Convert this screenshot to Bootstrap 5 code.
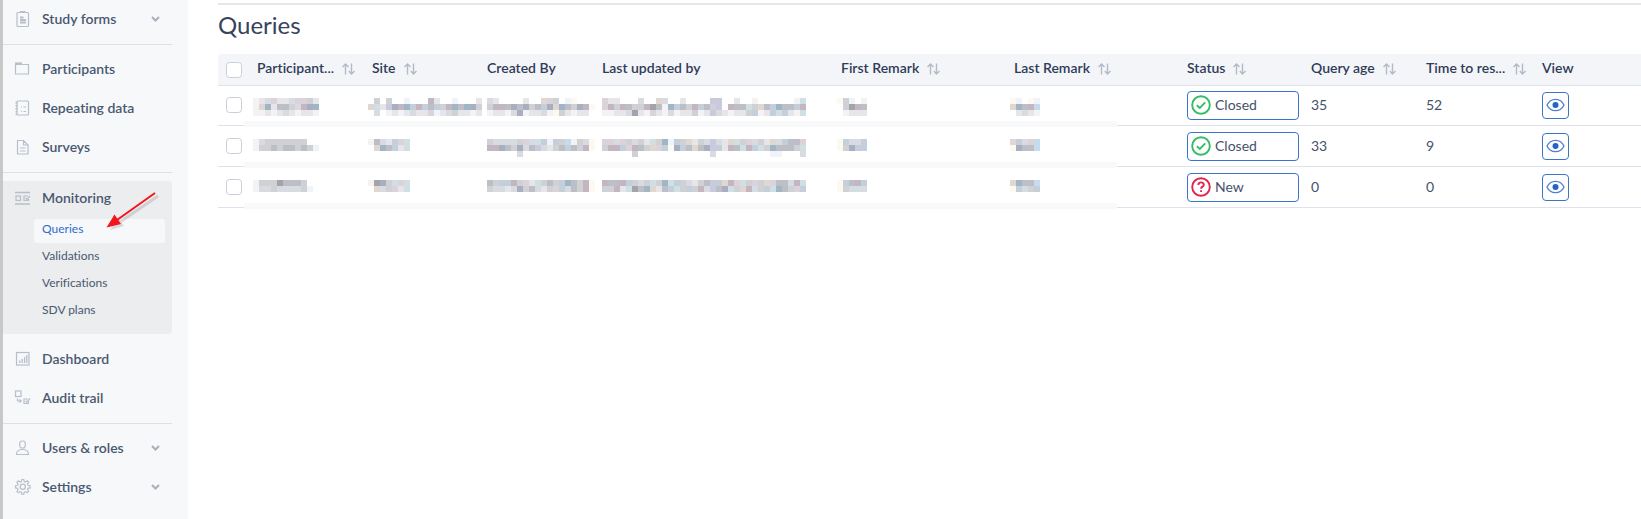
<!DOCTYPE html>
<html lang="en">
<head>
<meta charset="utf-8">
<meta name="viewport" content="width=device-width, initial-scale=1">
<title>Queries</title>
<link rel="stylesheet" href="https://cdn.jsdelivr.net/npm/bootstrap@5.3.0/dist/css/bootstrap.min.css">
<style>
  body { font-family: Lato, "Liberation Sans", sans-serif; font-size: 14px; line-height: 20px; color: #3f4b63; background: #fff; font-variant-ligatures: none; }
  .side { width: 188px; background: #f6f8fa; border-left: 3px solid #c8c8c8; padding-right: 16px; }
  .side hr { margin: 5px 0; border-top: 1px solid #dcdfe3; opacity: 1; }
  .side-link { height: 39px; width: 100%; padding: 0 12px 2px 11px; border: 0; background: none; color: #4a5870; font-weight: 600; text-align: left; text-decoration: none; }
  .side-link svg { flex: none; }
  .side-ico { width: 18px; height: 18px; margin-right: 10px; fill: none; stroke: #b9bfca; stroke-width: 1.2; }
  .chev { width: 9px; height: 6px; fill: none; stroke: #a9b0bc; stroke-width: 2; }
  .side-open { background: #ebedee; margin: 8px 0 6px; padding-bottom: 10px; border-radius: 0 3px 3px 0; }
  .side-open .side-link { height: 34px; padding-bottom: 0; }
  .sub-list { margin: 4px 7px 0 31px; gap: 3px; }
  .sub-link { height: 24px; padding: 0 8px 4px; font-size: 12px; border-radius: 3px; color: #4a5870; text-decoration: none; }
  .sub-link.active { background: #f6f8fa; color: #2f6bd0; }
  .pointer { position: absolute; left: 99px; top: 8px; width: 64px; height: 48px; }
  .main { padding: 3px 0 0 30px; }
  .main h1 { font-size: 24px; line-height: 28px; font-weight: 400; color: #37435d; margin: 6px 0 15px; }
  .rule { border-top: 2px solid #e6e7eb; }
  .grid-table { table-layout: fixed; border-collapse: separate; border-spacing: 0; color: #46516a; }
  .grid-table th { height: 31px; padding: 0 0 4px 13px; background: #f3f5f9; box-shadow: 0 1px 0 #e0e3ea; color: #2f3b57; font-weight: 600; white-space: nowrap; vertical-align: middle; }
  .grid-table th:first-child { border-top-left-radius: 4px; }
  .grid-table td { height: 41px; padding: 0 0 0 13px; border-bottom: 1px solid #dfe2ec; vertical-align: middle; }
  .grid-table .pick { padding: 0 0 0 8px; }
  .form-check-input { display: block; margin: 0; width: 16px; height: 16px; border-color: #c9ced9; border-radius: 3px; }
  .sort { width: 13px; height: 12px; margin-left: 8px; fill: none; stroke: #b4bac6; stroke-width: 1.4; }
  .grid-table .hid { position: relative; vertical-align: top; padding-top: 13px; }
  .hid::after { content: ""; position: absolute; left: 0; right: 0; bottom: -2px; height: 6px; background: #f8f9fb; }
  .hid-end::after { right: 57px; }
  .mosaic { display: block; shape-rendering: crispEdges; }
  .mosaic.fade-in { margin-left: -4px; }
  .state { width: 112px; height: 29px; padding: 0 0 0 3px; border: 1px solid #3c74cc; border-radius: 4px; background: #fff; color: #46516a; text-align: left; }
  .state svg { width: 20px; height: 20px; margin-right: 4px; fill: none; stroke-width: 1.9; }
  .view { width: 27px; height: 27px; padding: 0; border: 1px solid #3c74cc; border-radius: 4px; background: #fff; }
  .view svg { width: 19px; height: 14px; }
</style>
</head>
<body>
<svg class="d-none" aria-hidden="true">
  <symbol id="chev" viewBox="0 0 9 6"><path d="M1 1l3.500 3.500L8 1"/></symbol>
  <symbol id="sort" viewBox="0 0 13 12"><path d="M3.500 11.500V1M.5 4l3-3 3 3M9.500 .5V11M6.800 8l2.700 3 3-3"/></symbol>
  <symbol id="ok" viewBox="0 0 20 20"><circle cx="10" cy="10" r="8.800"/><path d="M5.800 10.300l3 2.700 5.400-5.600"/></symbol>
  <symbol id="ask" viewBox="0 0 20 20"><circle cx="10" cy="10" r="8.800"/><path d="M7.300 8c0-3.600 5.500-3.400 5.500-.3 0 2-2.700 1.900-2.700 4M10.100 13.300v1.700"/></symbol>
  <symbol id="eye" viewBox="0 0 19 14"><path d="M1 7c3.600-7.600 13.400-7.600 17 0-3.600 7.600-13.400 7.600-17 0z" fill="none" stroke="#4a7fd2" stroke-width="1.300"/><circle cx="9.500" cy="7" r="3" fill="#2464c6"/></symbol>
</svg>
<div class="d-flex min-vh-100">
  <nav class="side flex-shrink-0" aria-label="Study">
    <button class="side-link d-flex align-items-center" type="button">
      <svg class="side-ico" viewBox="0 0 18 18"><rect x="3" y="2.500" width="11.500" height="14" rx="1"/><path d="M6 2h5.500" stroke-width="2"/><path d="M6 7.500h3.500M6 10h6M6 12.500h6" stroke-width="1.800"/></svg>
      <span class="flex-grow-1">Study forms</span><svg class="chev"><use href="#chev"/></svg></button>
    <hr>
    <a class="side-link d-flex align-items-center" href="#">
      <svg class="side-ico" viewBox="0 0 18 18"><path d="M1.500 4.500v9.500h13V4.500z"/><path d="M1 3.500h7" stroke-width="2.200"/></svg>Participants</a>
    <a class="side-link d-flex align-items-center" href="#">
      <svg class="side-ico" viewBox="0 0 18 18"><rect x="3" y="2" width="11.500" height="14" rx="1"/><path d="M7 8h1M9.500 8H12M7 12.500h1M9.500 12.500H12"/><path d="M2.500 3v13" stroke-width="2" stroke-dasharray="1.500 1.500"/></svg>Repeating data</a>
    <a class="side-link d-flex align-items-center" href="#">
      <svg class="side-ico" viewBox="0 0 18 18"><path d="M3.500 2.500h6l4.500 4.500v9H3.500zM9.500 2.500V7H14M6 10h5.500M6 13h5.500"/></svg>Surveys</a>
    <hr>
    <div class="side-open position-relative">
      <a class="side-link d-flex align-items-center" href="#">
        <svg class="side-ico" viewBox="0 0 18 18"><path d="M1 3.500h15M1 15h15" stroke-width="1.600"/><rect x="2" y="7" width="4.500" height="4.500"/><path d="M14 7h-4v4.500h4.500V10M11.500 9l1.500 1.300L16 7"/></svg>Monitoring</a>
      <div class="sub-list d-flex flex-column">
        <a class="sub-link active d-flex align-items-center" href="#" aria-current="page">Queries</a>
        <a class="sub-link d-flex align-items-center" href="#">Validations</a>
        <a class="sub-link d-flex align-items-center" href="#">Verifications</a>
        <a class="sub-link d-flex align-items-center" href="#">SDV plans</a>
      </div>
      <svg class="pointer" viewBox="0 0 64 48" aria-hidden="true">
        <g transform="translate(3 3)" opacity=".18"><path d="M53 4L15 30" stroke="#555" stroke-width="3"/><path d="M5 38l8-13 6 9z" fill="#555"/></g>
        <path d="M53 4L15 31" stroke="#f5141c" stroke-width="2"/><path d="M4.500 38.500l8-13 6.500 9.500z" fill="#f5141c"/>
      </svg>
    </div>
    <a class="side-link d-flex align-items-center" href="#">
      <svg class="side-ico" viewBox="0 0 18 18"><rect x="2.500" y="2.500" width="12.500" height="12.500"/><path d="M5.800 13v-2.500M8.200 13V9M10.600 13V7M12.800 13V5" stroke-width="1.300"/></svg>Dashboard</a>
    <a class="side-link d-flex align-items-center" href="#">
      <svg class="side-ico" viewBox="0 0 18 18"><rect x="1.500" y="2" width="5.500" height="5.500"/><path d="M3.500 9.500V12H7M5.500 10.300L7.200 12l-1.700 1.700M14 10h-4v4.500h4.500V12.500M11.500 11.800l1.300 1.300L16 9.500"/></svg>Audit trail</a>
    <hr>
    <button class="side-link d-flex align-items-center" type="button">
      <svg class="side-ico" viewBox="0 0 18 18"><rect x="5.700" y="2" width="5.600" height="7" rx="2.500"/><path d="M2.500 15.500c0-3.500 2-4.500 4.500-5h3c2.500.5 4.500 1.500 4.500 5z"/></svg>
      <span class="flex-grow-1">Users &amp; roles</span><svg class="chev"><use href="#chev"/></svg></button>
    <button class="side-link d-flex align-items-center" type="button">
      <svg class="side-ico" viewBox="0 0 18 18"><path d="M7.400 3.500l.4-2h2l.4 2 1.200.5 1.800-1.200 1.500 1.500-1.200 1.800.5 1.200 2.100.4v2.200l-2.100.4-.5 1.200 1.200 1.800-1.500 1.500-1.800-1.200-1.200.5-.4 2h-2l-.4-2-1.200-.5-1.800 1.200-1.500-1.500 1.200-1.800-.5-1.200-2.100-.4V7.700l2.100-.4.5-1.200-1.200-1.800 1.500-1.500L6.200 4z"/><circle cx="8.800" cy="8.800" r="2.600"/></svg>
      <span class="flex-grow-1">Settings</span><svg class="chev"><use href="#chev"/></svg></button>
  </nav>
  <main class="main flex-grow-1">
    <div class="rule"></div>
    <h1>Queries</h1>
    <table class="grid-table w-100">
      <colgroup>
        <col style="width:26px"><col style="width:115px"><col style="width:115px"><col style="width:115px"><col style="width:239px"><col style="width:173px"><col style="width:173px"><col style="width:124px"><col style="width:115px"><col style="width:116px"><col>
      </colgroup>
      <thead>
        <tr>
          <th class="pick"><input class="form-check-input" type="checkbox" aria-label="Select all"></th>
          <th>Participant...<svg class="sort"><use href="#sort"/></svg></th>
          <th>Site<svg class="sort"><use href="#sort"/></svg></th>
          <th>Created By</th>
          <th>Last updated by</th>
          <th>First Remark<svg class="sort"><use href="#sort"/></svg></th>
          <th>Last Remark<svg class="sort"><use href="#sort"/></svg></th>
          <th>Status<svg class="sort"><use href="#sort"/></svg></th>
          <th>Query age<svg class="sort"><use href="#sort"/></svg></th>
          <th>Time to res...<svg class="sort"><use href="#sort"/></svg></th>
          <th>View</th>
        </tr>
      </thead>
      <tbody id="rows"></tbody>
    </table>
  </main>
</div>
<script src="https://cdn.jsdelivr.net/npm/bootstrap@5.3.0/dist/js/bootstrap.bundle.min.js"></script>
<script>
  // Redacted values are drawn as 6px blocks, one palette letter per block.
  const palette = { a:'#f4f2f2', b:'#e5e5ea', c:'#d9dbe3', d:'#d0d1d5', e:'#bcc0c6', f:'#a9afc0', g:'#c3cfdb', h:'#a0b6c7', i:'#dcd2d9', j:'#e0d7d1', k:'#c4b6c1', l:'#cfdfe4', m:'#fbf9f0', n:'#cacade', o:'#a3a4a9', p:'#c6dcee', q:'#eff4fa' };
  const rows = [
    { state: 'Closed', icon: 'ok', color: '#35bd66', age: 35, time: 52, hidden: [
      ['abcibbciidb', 'ajhbeedckfh', 'aababcbabba'],
      ['.d.d..q...kb..q...b', 'jlbnfkhgkgegdkhehfd', '.c.abqbcbbiqbcdbbab'],
      ['cb....b..jid.qm...', 'dkkefefdegfjhedfkm', 'abbacfabbcamdbabb.'],
      ['ibb...c..jc..b....nn..b..a......al', 'ikdkeddkoeahgedkgedn.keeldjegheegk', 'aabbcobaibacabbdabncbabbdgabglgbal'],
      ['mdq.a', '.doke', '.abbb'],
      ['mq.mq', 'jhekp', '.bcba'] ] },
    { state: 'Closed', icon: 'ok', color: '#35bd66', age: 33, time: 9, hidden: [
      ['acddddddd..', 'addedeededq'],
      ['aecbgil', '.jhegbl'],
      ['dccccdiclgagdpadcm', 'kkfedfcencbdegedkm', '.....c............'],
      ['iicidcdbldhqgdjbdcncbjldicdbjcgeei', 'dkkgikedjigmfgejefngbkelkgldheeedl', '.....d............c.........qq...c'],
      ['mgccg', 'mdfng'],
      ['jgcip', 'mfeep'] ] },
    { state: 'New', icon: 'ask', color: '#e0264e', age: 0, time: 0, hidden: [
      ['adddoeeed..', 'accdccccdq.'],
      ['aofdlil', '.jcdibl'],
      ['edggkdibldedghedkm', 'dccbcfdecbdigcedkm'],
      ['keekgdcdldhlgdcbdengjkildidjieelkl', 'ddkbloehjbegldgdkcnefldjkldglhedig'],
      ['mgekg', 'mdclc'],
      ['jheep', 'mgcdg'] ] }
  ];
  function mosaic(lines) {
    const w = lines[0].length * 6, h = lines.length * 6;
    let cells = '';
    lines.forEach((line, y) => [...line].forEach((c, x) => {
      if (palette[c]) cells += `<rect x="${x * 6}" y="${y * 6}" width="6" height="6" fill="${palette[c]}"/>`;
    }));
    return [w, h, cells];
  }
  document.getElementById('rows').innerHTML = rows.map((r, n) => {
    const hidden = r.hidden.map((lines, i) => {
      const [w, h, cells] = mosaic(lines);
      const fade = i === 2 || i === 3 ? '' : ' fade-in';
      return `<td class="hid${i === 5 ? ' hid-end' : ''}"><svg class="mosaic${fade}" width="${w}" height="${h}" role="img" aria-label="Redacted">${cells}</svg></td>`;
    }).join('');
    return `<tr><td class="pick"><input class="form-check-input" type="checkbox" aria-label="Select row ${n + 1}"></td>${hidden}
      <td><button type="button" class="state d-flex align-items-center"><svg stroke="${r.color}"><use href="#${r.icon}"/></svg>${r.state}</button></td>
      <td>${r.age}</td><td>${r.time}</td>
      <td><button type="button" class="view d-flex align-items-center justify-content-center" aria-label="View query"><svg><use href="#eye"/></svg></button></td></tr>`;
  }).join('');
</script>
</body>
</html>
